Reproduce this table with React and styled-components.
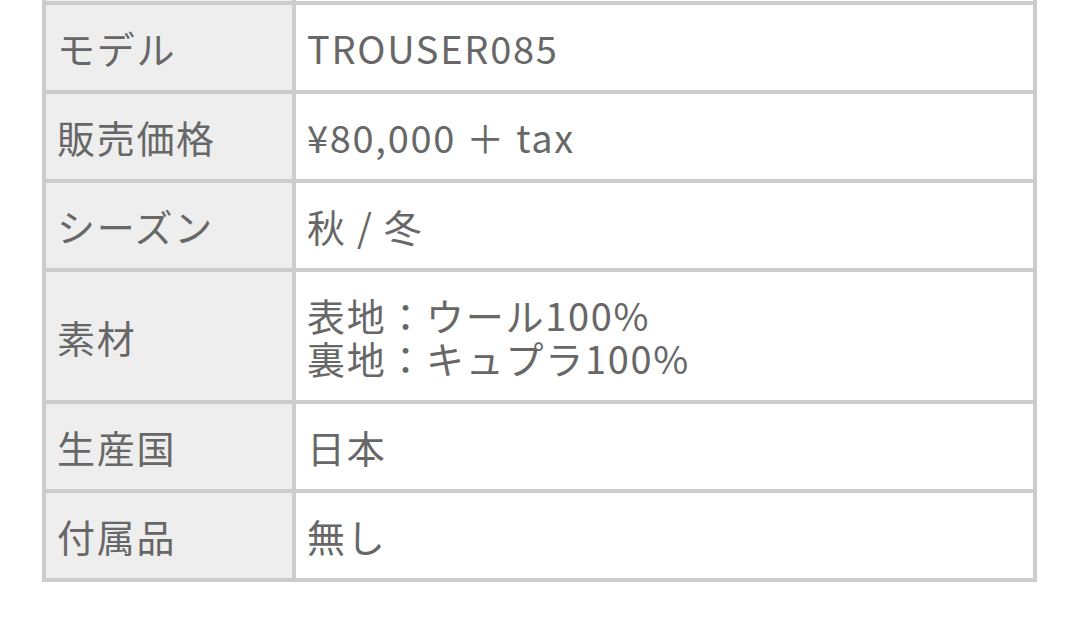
import React from 'react'
import styled, { createGlobalStyle } from 'styled-components'

const GlobalStyle = createGlobalStyle`
  html, body {
    margin: 0;
    padding: 0;
    background: #fff;
    overflow: hidden;
  }
`

const Page = styled.div`
  padding: 0 43px 0 42px;
  margin-top: -88px;
  font-family: "Noto Sans CJK JP", "Noto Sans", sans-serif;
  color: #676767;
`

const SpecTable = styled.div`
  display: grid;
  grid-template-columns: 246px 1fr;
  gap: 4px;
  width: 995px;
  box-sizing: border-box;
  border: 4px solid #ccc;
  background: #ccc;
`

const Cell = styled.div`
  background: ${props => (props.head ? '#eeeeee' : '#fff')};
  padding: 21px 10px 21px 11px;
  font-size: 38px;
  line-height: 43px;
  letter-spacing: 1.7px;
  display: flex;
  flex-direction: column;
  justify-content: center;
  white-space: nowrap;
`

const rows = [
  { label: 'ブランド', value: ['LORO PIANA'] },
  { label: 'モデル', value: ['TROUSER085'] },
  { label: '販売価格', value: ['¥80,000 ＋ tax'] },
  { label: 'シーズン', value: ['秋 / 冬'] },
  { label: '素材', value: ['表地：ウール100%', '裏地：キュプラ100%'] },
  { label: '生産国', value: ['日本'] },
  { label: '付属品', value: ['無し'] }
]

export default function App() {
  return (
    <>
      <GlobalStyle />
      <Page>
        <SpecTable>
          {rows.map(row => (
            <React.Fragment key={row.label}>
              <Cell head>{row.label}</Cell>
              <Cell>
                {row.value.map(line => (
                  <span key={line}>{line}</span>
                ))}
              </Cell>
            </React.Fragment>
          ))}
        </SpecTable>
      </Page>
    </>
  )
}
